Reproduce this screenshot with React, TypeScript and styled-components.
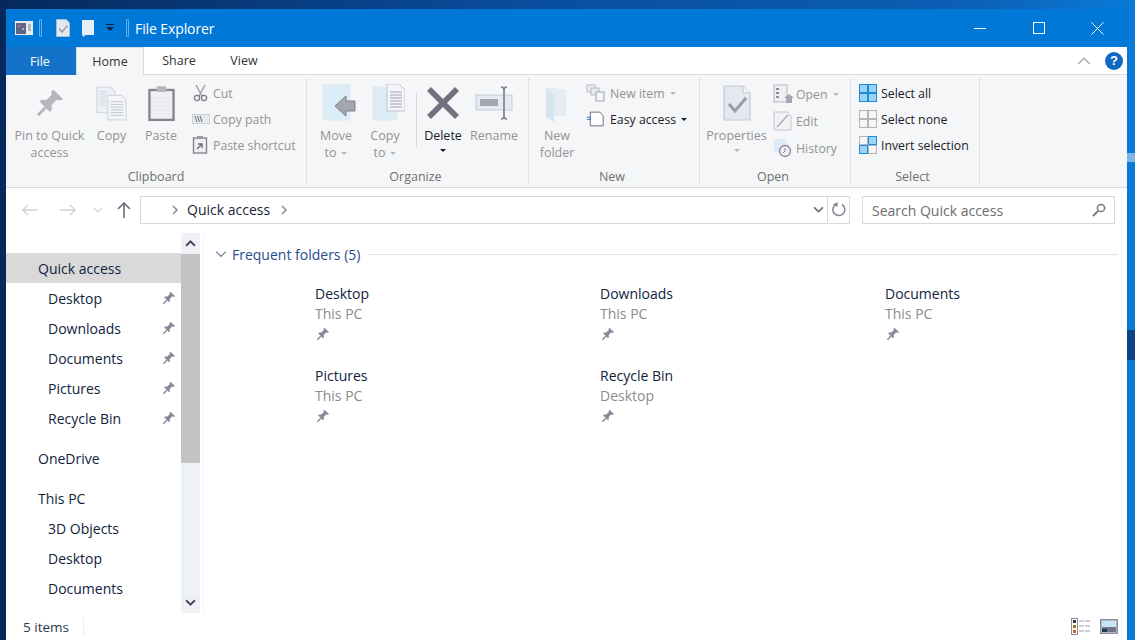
import React from "react";
import styled, { createGlobalStyle } from "styled-components";

const GlobalStyle = createGlobalStyle`
  html, body, #root {
    margin: 0;
    height: 100%;
  }
  body {
    overflow: hidden;
    font-family: "Open Sans", "Noto Sans", "Liberation Sans", sans-serif;
    background:
      linear-gradient(#0b4488, #0b4488) right 330px / 8px 30px no-repeat,
      linear-gradient(#7fb4e4, #7fb4e4) right 153px / 8px 9px no-repeat,
      linear-gradient(90deg, #06295c 0%, #0a4c9c 45%, #0b5fb5 85%, #0a7bd8 100%);
  }
`;

const Desktop = styled.div`
  height: 100%;
  box-sizing: border-box;
  padding: 9px 8px 0 6px;
  display: flex;
`;

const Frame = styled.div`
  flex: 1;
  min-width: 0;
  display: flex;
  flex-direction: column;
  background: #fff;
`;

const TitleBar = styled.div`
  height: 38px;
  flex: none;
  display: flex;
  align-items: center;
  background: #0078d7;
  color: #fff;
`;

const Quick = styled.div`
  display: flex;
  align-items: center;
  padding-left: 9px;
`;

const QuickIcon = styled.svg<{ $m?: number }>`
  display: block;
  flex: none;
  margin-left: ${({ $m }) => $m ?? 0}px;
`;

const TitleSep = styled.span<{ $m: number }>`
  width: 1px;
  height: 16px;
  margin-left: ${({ $m }) => $m}px;
  background: #0078d7;
  border: 1px solid #65aee8;
  border-radius: 1px;
`;

const Title = styled.div`
  margin-left: 6px;
  font-size: 14px;
  letter-spacing: -0.1px;
  flex: 1;
`;

const WinButtons = styled.div`
  display: flex;
  height: 100%;
`;

const WinButton = styled.div`
  width: 59px;
  display: flex;
  align-items: center;
  justify-content: center;
`;

const TabBar = styled.div`
  height: 28px;
  flex: none;
  display: flex;
  align-items: stretch;
  box-sizing: border-box;
  border-bottom: 1px solid #dadbdc;
  background: #fff;
  font-size: 12.5px;
  color: #333;
`;

const FileTab = styled.div`
  width: 70px;
  box-sizing: border-box;
  padding-right: 2px;
  margin-bottom: -1px;
  background: #1572c9;
  color: #fff;
  display: flex;
  align-items: center;
  justify-content: center;
`;

const Tab = styled.div<{ $active?: boolean; $w: number }>`
  width: ${({ $w }) => $w}px;
  box-sizing: border-box;
  display: flex;
  align-items: center;
  justify-content: center;
  margin-bottom: ${({ $active }) => ($active ? "-1px" : "0")};
  background: ${({ $active }) => ($active ? "#f5f6f7" : "#fff")};
  border: ${({ $active }) => ($active ? "1px solid #dadbdc" : "none")};
  border-bottom: none;
`;

const TabSpacer = styled.div`
  flex: 1;
`;

const TabTools = styled.div`
  display: flex;
  align-items: center;
  gap: 14px;
  padding-right: 4px;
`;

const HelpBadge = styled.div`
  width: 18px;
  height: 18px;
  border-radius: 50%;
  background: #1169c4;
  color: #fff;
  font: bold 13px "Liberation Sans", sans-serif;
  display: flex;
  align-items: center;
  justify-content: center;
`;

const Ribbon = styled.div`
  height: 113px;
  flex: none;
  box-sizing: border-box;
  display: flex;
  background: #f5f6f7;
  border-bottom: 1px solid #dadbdc;
  padding-top: 4px;
`;

const Group = styled.div<{ $w: number }>`
  width: ${({ $w }) => $w}px;
  flex: none;
  box-sizing: border-box;
  display: flex;
  flex-direction: column;
  margin-bottom: 3px;
  border-right: 1px dotted #c9cacb;
`;

const GroupBody = styled.div<{ $pad?: number }>`
  flex: 1;
  display: flex;
  padding-left: ${({ $pad }) => $pad ?? 0}px;
`;

const GroupLabel = styled.div<{ $nudge?: number }>`
  height: 17px;
  line-height: 20px;
  text-align: center;
  padding-right: ${({ $nudge }) => $nudge ?? 0}px;
  font-size: 12.5px;
  color: #707070;
`;

const BigButton = styled.div<{ $w: number; $on?: boolean }>`
  width: ${({ $w }) => $w}px;
  flex: none;
  display: flex;
  flex-direction: column;
  align-items: center;
  padding-top: 4px;
  text-align: center;
  font-size: 12.5px;
  line-height: 17px;
  color: ${({ $on }) => ($on ? "#1c1c28" : "#939393")};
`;

const BigIcon = styled.div`
  height: 40px;
  margin-bottom: 4px;
  display: flex;
  align-items: center;
  justify-content: center;
`;

const Caret = styled.span<{ $on?: boolean }>`
  display: inline-block;
  width: 0;
  height: 0;
  margin-left: 5px;
  vertical-align: 2px;
  border-left: 3.5px solid transparent;
  border-right: 3.5px solid transparent;
  border-top: 3.5px solid ${({ $on }) => ($on ? "#1c1c28" : "#b9b9b9")};
`;

const BlockCaret = styled(Caret)`
  display: block;
  margin: 5px auto 0;
`;

const OrgDivider = styled.div`
  width: 1px;
  height: 54px;
  margin: 14px 1px 0 6px;
  flex: none;
  background: #d5d6d7;
`;

const SmallList = styled.div<{ $left?: number; $gap: number; $top: number }>`
  display: flex;
  flex-direction: column;
  gap: ${({ $gap }) => $gap}px;
  padding-top: ${({ $top }) => $top}px;
  margin-left: ${({ $left }) => $left ?? 0}px;
`;

const SmallButton = styled.div<{ $slot: number; $on?: boolean }>`
  height: 20px;
  display: flex;
  align-items: center;
  white-space: nowrap;
  font-size: 12.3px;
  color: ${({ $on }) => ($on ? "#1c1c28" : "#939393")};

  & > svg {
    width: ${({ $slot }) => $slot}px;
    flex: none;
  }
`;

const AddressRow = styled.div`
  height: 45px;
  flex: none;
  display: flex;
  align-items: flex-start;
  padding-top: 8px;
  box-sizing: border-box;
`;

const NavArrows = styled.div`
  width: 134px;
  height: 27px;
  flex: none;
  display: flex;
  align-items: center;
`;

const AddressBox = styled.div`
  width: 710px;
  height: 28px;
  flex: none;
  box-sizing: border-box;
  padding-bottom: 1px;
  display: flex;
  align-items: center;
  border: 1px solid #d9d9d9;
  font-size: 14px;
  color: #1b2433;
`;

const Crumb = styled.span`
  margin: 0 10px 0 8px;
`;

const AddressGrow = styled.div`
  flex: 1;
`;

const Refresh = styled.div`
  width: 21px;
  height: 100%;
  margin-left: 3px;
  display: flex;
  align-items: center;
  justify-content: center;
  border-left: 1px solid #d9d9d9;
`;

const SearchBox = styled.div`
  width: 253px;
  height: 28px;
  margin-left: 12px;
  flex: none;
  box-sizing: border-box;
  padding: 0 8px 0 9px;
  display: flex;
  align-items: center;
  justify-content: space-between;
  border: 1px solid #d9d9d9;
  font-size: 14px;
  color: #6d6d6d;
`;

const Body = styled.div`
  flex: 1;
  min-height: 0;
  display: flex;
`;

const NavPane = styled.div`
  width: 175px;
  flex: none;
  padding-top: 20px;
  box-sizing: border-box;
  overflow: hidden;
`;

const NavRow = styled.div<{ $selected?: boolean; $root?: boolean; $gap?: boolean }>`
  height: 30px;
  display: flex;
  align-items: center;
  justify-content: space-between;
  box-sizing: border-box;
  padding: 0 5px 0 ${({ $root }) => ($root ? 32 : 42)}px;
  margin-top: ${({ $gap }) => ($gap ? 10 : 0)}px;
  font-size: 14px;
  color: #10233c;
  background: ${({ $selected }) => ($selected ? "#d9d9d9" : "transparent")};
`;

const Scrollbar = styled.div`
  width: 19px;
  flex: none;
  display: flex;
  flex-direction: column;
  background: #eef1f6;
`;

const ScrollArrow = styled.div`
  height: 21px;
  flex: none;
  display: flex;
  align-items: center;
  justify-content: center;
`;

const ScrollThumb = styled.div`
  height: 209px;
  flex: none;
  background: #c3c3c3;
`;

const ScrollTrack = styled.div`
  flex: 1;
`;

const Content = styled.div`
  flex: 1;
  min-width: 0;
  margin-left: 3px;
  border-left: 1px solid #f2f2f2;
  padding: 11px 9px 0 11px;
`;

const SectionHead = styled.div`
  height: 20px;
  display: flex;
  align-items: center;
  font-size: 14px;
  color: #1f4e8c;
`;

const SectionName = styled.span`
  margin: 0 8px 0 5px;
  white-space: nowrap;
`;

const SectionRule = styled.div`
  flex: 1;
  border-top: 1px solid #e2e2e2;
`;

const TileGrid = styled.div`
  display: grid;
  grid-template-columns: repeat(3, 285px);
  grid-auto-rows: 82px;
  padding: 20px 0 0 100px;
`;

const Tile = styled.div`
  display: flex;
  flex-direction: column;
`;

const TileName = styled.div`
  height: 20px;
  line-height: 20px;
  font-size: 14px;
  color: #10233c;
`;

const TileSub = styled(TileName)`
  color: #8b8b8b;
`;

const TilePin = styled.div`
  height: 20px;
  padding-left: 1px;
  display: flex;
  align-items: center;
`;

const StatusBar = styled.div`
  height: 27px;
  flex: none;
  display: flex;
  align-items: center;
  padding-left: 17px;
  font-size: 13.5px;
  color: #2e3a4a;
`;

const StatusText = styled.div`
  width: 60px;
  height: 18px;
  line-height: 18px;
  border-right: 1px solid #ececec;
`;

const ViewButtons = styled.div`
  margin-left: auto;
  padding-right: 9px;
  display: flex;
  align-items: center;
  gap: 10px;
`;

const Pin = ({ size = 14, color = "#8a8799" }: { size?: number; color?: string }) => (
  <svg width={size} height={size} viewBox="0 0 16 16">
    <path d="M10 1l5 5-1.4.5-2.2-.1-2.6 2.8.2 2.4-1 1.2-5.6-5.6 1.2-1 2.4.2 2.8-2.6-.1-2.2z" fill={color} />
    <path d="M5.5 10.5L1.5 14.5" stroke={color} strokeWidth="1.6" />
  </svg>
);

const Chevron = ({ dir, color = "#8a8a8a", size = 10, w = 1.4 }: { dir: "up" | "down" | "right"; color?: string; size?: number; w?: number }) => {
  const d = dir === "up" ? "M1 7l4-4 4 4" : dir === "down" ? "M1 3l4 4 4-4" : "M3 1l4 4-4 4";
  return (
    <svg width={size} height={size} viewBox="0 0 10 10">
      <path d={d} fill="none" stroke={color} strokeWidth={w} />
    </svg>
  );
};

const ExplorerIcon = () => (
  <QuickIcon width="18" height="14" viewBox="0 0 18 14">
    <rect width="18" height="14" fill="#e9ebf0" />
    <rect x="1" y="2" width="10" height="11" fill="#5d6685" />
    <rect x="3" y="4" width="2" height="2" fill="#c0707f" />
    <rect x="7" y="7" width="2" height="2" fill="#9fb0d4" />
    <rect x="13" y="3" width="3" height="7" fill="#b4b8c2" />
  </QuickIcon>
);

const PropsIcon = ({ w = 14, h = 18, m }: { w?: number; h?: number; m?: number }) => (
  <QuickIcon $m={m} width={w} height={h} viewBox="0 0 28 36">
    <path d="M1 1h19l7 7v27H1z" fill="#e3e8f1" stroke="#c5cad3" strokeWidth="1.2" />
    <path d="M20 1v7h7" fill="#f5f6f7" stroke="#c5cad3" strokeWidth="1.2" />
    <path d="M6 19l6 7 11-13" fill="none" stroke="#9b9ca6" strokeWidth="3" />
  </QuickIcon>
);

const PageStack = () => (
  <svg width="31" height="37" viewBox="0 0 34 38">
    <path d="M1 1h15l5 5v23H1z" fill="#eceff5" stroke="#cdd1d9" />
    <path d="M13 10h15l5 5v22H13z" fill="#f3f5f8" stroke="#c9cdd6" />
    {[17, 20, 23, 26, 29, 32].map((y) => (
      <path key={y} d={`M16 ${y}h14`} stroke="#c0c4cf" />
    ))}
    {[6, 9, 12, 15, 18, 21].map((y) => (
      <path key={y} d={`M4 ${y}h7`} stroke="#d2d6de" />
    ))}
  </svg>
);

const ClipboardIcon = () => (
  <svg width="27" height="38" viewBox="0 0 28 38">
    <rect x="1.5" y="5.5" width="25" height="31" fill="#eef0f4" stroke="#86838f" strokeWidth="2.4" />
    <rect x="9" y="1.5" width="10" height="6" rx="1.5" fill="#b5b5bd" />
    {[14, 18, 22, 26, 30].map((y) => (
      <path key={y} d={`M6 ${y}h16`} stroke="#d3d5db" strokeDasharray="1 2" />
    ))}
  </svg>
);

const MoveIcon = () => (
  <svg width="40" height="38" viewBox="0 0 40 38">
    <path d="M7 0h27v36H7z" fill="#dcedf7" stroke="#e2e8ee" />
    <path d="M19 22l11-10v5h9v10h-9v5z" fill="#a3a6ae" stroke="#7f8089" />
  </svg>
);

const CopyToIcon = () => (
  <svg width="40" height="38" viewBox="0 0 40 38">
    <path d="M8 3h24v33H8z" fill="#dcedf7" stroke="#e2e8ee" />
    <path d="M22 0h12l6 6v21H22z" fill="#f3f5f8" stroke="#c0c4cf" />
    {[8, 11, 14, 17, 20, 23].map((y) => (
      <path key={y} d={`M25 ${y}h12`} stroke="#9da1ad" />
    ))}
  </svg>
);

const DeleteIcon = () => (
  <svg width="32" height="32" viewBox="0 0 32 32">
    <path d="M4 0L16 12 28 0l4 4-12 12 12 12-4 4-12-12L4 32l-4-4 12-12L0 4z" fill="#73707f" />
  </svg>
);

const RenameIcon = () => (
  <svg width="38" height="36" viewBox="0 0 38 36">
    <rect x="1" y="10" width="36" height="15" fill="#e4ebf3" stroke="#c6ccd6" />
    <rect x="5" y="14" width="18" height="7" fill="#a4a6ae" />
    <path d="M26 2c2 0 3 1 3 3v26c0 2-1 3-3 3M32 2c-2 0-3 1-3 3v26c0 2 1 3 3 3" fill="none" stroke="#7e7c8a" strokeWidth="1.6" />
  </svg>
);

const FolderIcon = () => (
  <svg width="26" height="38" viewBox="0 0 26 38">
    <path d="M2 4h8l12 2v26H8z" fill="#e6ecf2" />
    <path d="M2 4l8 6v28l-8-5z" fill="#d6e6f1" />
  </svg>
);

const BlankDoc = () => (
  <svg width="28" height="18" viewBox="0 0 28 18">
    <path d="M5 1h11l4 4v12H5z" fill="#fff" stroke="#55596a" />
    <path d="M1 7h5M1 9.5h5" stroke="#1b6ec2" />
  </svg>
);

const SelectGrid = ({ fill }: { fill: boolean[] }) => (
  <svg width="23" height="18" viewBox="0 0 23 18">
    {[
      [1, 0],
      [10, 0],
      [1, 9],
      [10, 9],
    ].map(([x, y], i) => (
      <rect
        key={i}
        x={x + 0.5}
        y={y + 0.5}
        width="8"
        height="8"
        fill={fill[i] ? "#9ad4f5" : "none"}
        stroke={fill[i] ? "#1f8ad6" : "#b5b5b5"}
      />
    ))}
  </svg>
);

const clipRows = [
  { label: "Cut", icon: (
    <svg width="21" height="20" viewBox="0 0 21 20">
      <path d="M4 2l6 11M13 2L7 13" stroke="#9a9aa4" strokeWidth="1.3" />
      <circle cx="5" cy="15" r="2.6" fill="none" stroke="#7f7d8b" strokeWidth="1.3" />
      <circle cx="12" cy="15" r="2.6" fill="none" stroke="#7f7d8b" strokeWidth="1.3" />
    </svg>
  ) },
  { label: "Copy path", icon: (
    <svg width="21" height="12" viewBox="0 0 21 12">
      <rect x="0.5" y="1.5" width="17" height="9" fill="#e6e9ee" stroke="#cfd2d8" />
      <path d="M3 3l2 6M5.5 3l2 6M8 3l2 6" stroke="#6f6e7c" />
    </svg>
  ) },
  { label: "Paste shortcut", icon: (
    <svg width="21" height="20" viewBox="0 0 21 20">
      <rect x="1.5" y="3" width="13" height="15" fill="#eef0f4" stroke="#86838f" strokeWidth="1.4" />
      <rect x="5" y="1" width="6" height="3" fill="#9c9ca6" />
      <path d="M5 14l4-4M6 9h4v4" fill="none" stroke="#6f6e7c" strokeWidth="1.4" />
    </svg>
  ) },
];

const navRows = [
  { label: "Quick access", root: true, selected: true },
  { label: "Desktop", pin: true },
  { label: "Downloads", pin: true },
  { label: "Documents", pin: true },
  { label: "Pictures", pin: true },
  { label: "Recycle Bin", pin: true },
  { label: "OneDrive", root: true, gap: true },
  { label: "This PC", root: true, gap: true },
  { label: "3D Objects" },
  { label: "Desktop" },
  { label: "Documents" },
];

const tiles = [
  { name: "Desktop", sub: "This PC" },
  { name: "Downloads", sub: "This PC" },
  { name: "Documents", sub: "This PC" },
  { name: "Pictures", sub: "This PC" },
  { name: "Recycle Bin", sub: "Desktop" },
];

const App: React.FC = () => {
  return (
    <Desktop>
      <GlobalStyle />
      <Frame>
        <TitleBar>
          <Quick>
            <ExplorerIcon />
            <TitleSep $m={6} />
            <PropsIcon m={14} />
            <QuickIcon $m={12} width="12" height="18" viewBox="0 0 12 18">
              <path d="M0 1h12v15l-9 0-1 2-2-2z" fill="#e6edf4" />
            </QuickIcon>
            <QuickIcon $m={12} width="8" height="8" viewBox="0 0 8 8">
              <path d="M0 0h8v1H0zM0 3h8L4 7z" fill="#11233f" />
            </QuickIcon>
            <TitleSep $m={12} />
          </Quick>
          <Title>File Explorer</Title>
          <WinButtons>
            <WinButton>
              <svg width="12" height="12" viewBox="0 0 12 12">
                <path d="M0 6.5h12" stroke="#fff" />
              </svg>
            </WinButton>
            <WinButton>
              <svg width="12" height="12" viewBox="0 0 12 12">
                <rect x="0.5" y="0.5" width="11" height="11" fill="none" stroke="#fff" />
              </svg>
            </WinButton>
            <WinButton>
              <svg width="13" height="13" viewBox="0 0 13 13">
                <path d="M0.5 0.5l12 12M12.5 0.5l-12 12" stroke="#fff" />
              </svg>
            </WinButton>
          </WinButtons>
        </TitleBar>

        <TabBar>
          <FileTab>File</FileTab>
          <Tab $active $w={68}>Home</Tab>
          <Tab $w={70}>Share</Tab>
          <Tab $w={60}>View</Tab>
          <TabSpacer />
          <TabTools>
            <Chevron dir="up" size={14} w={1} color="#a9a9a9" />
            <HelpBadge>?</HelpBadge>
          </TabTools>
        </TabBar>

        <Ribbon>
          <Group $w={301}>
            <GroupBody>
              <BigButton $w={87}>
                <BigIcon><Pin size={30} color="#b4b5bd" /></BigIcon>
                Pin to Quick access
              </BigButton>
              <BigButton $w={37}>
                <BigIcon><PageStack /></BigIcon>
                Copy
              </BigButton>
              <BigButton $w={62}>
                <BigIcon><ClipboardIcon /></BigIcon>
                Paste
              </BigButton>
              <SmallList $gap={6} $top={4}>
                {clipRows.map((row) => (
                  <SmallButton key={row.label} $slot={21}>
                    {row.icon}
                    {row.label}
                  </SmallButton>
                ))}
              </SmallList>
            </GroupBody>
            <GroupLabel>Clipboard</GroupLabel>
          </Group>

          <Group $w={222}>
            <GroupBody $pad={5}>
              <BigButton $w={48}>
                <BigIcon><MoveIcon /></BigIcon>
                Move
                <span>to<Caret /></span>
              </BigButton>
              <BigButton $w={50}>
                <BigIcon><CopyToIcon /></BigIcon>
                Copy
                <span>to<Caret /></span>
              </BigButton>
              <OrgDivider />
              <BigButton $w={50} $on>
                <BigIcon><DeleteIcon /></BigIcon>
                Delete
                <BlockCaret $on />
              </BigButton>
              <BigButton $w={52}>
                <BigIcon><RenameIcon /></BigIcon>
                Rename
              </BigButton>
            </GroupBody>
            <GroupLabel $nudge={4}>Organize</GroupLabel>
          </Group>

          <Group $w={171}>
            <GroupBody $pad={3}>
              <BigButton $w={50}>
                <BigIcon><FolderIcon /></BigIcon>
                New folder
              </BigButton>
              <SmallList $left={4} $gap={6} $top={4}>
                <SmallButton $slot={24}>
                  <svg width="24" height="18" viewBox="0 0 24 18">
                    <rect x="1" y="1" width="8" height="7" fill="#e9ecf1" stroke="#b6b9c2" />
                    <rect x="5" y="4" width="8" height="7" fill="#e9ecf1" stroke="#b6b9c2" />
                    <rect x="10" y="8" width="8" height="9" fill="#f5f6f8" stroke="#9fa3ad" />
                  </svg>
                  New item<Caret />
                </SmallButton>
                <SmallButton $slot={24} $on>
                  <BlankDoc />
                  Easy access<Caret $on />
                </SmallButton>
              </SmallList>
            </GroupBody>
            <GroupLabel $nudge={4}>New</GroupLabel>
          </Group>

          <Group $w={151}>
            <GroupBody>
              <BigButton $w={73}>
                <BigIcon><PropsIcon w={28} h={36} /></BigIcon>
                Properties
                <BlockCaret />
              </BigButton>
              <SmallList $gap={7} $top={5}>
                <SmallButton $slot={23}>
                  <svg width="23" height="20" viewBox="0 0 23 20">
                    <rect x="1" y="1" width="13" height="17" fill="#eef0f4" stroke="#b5b8c0" />
                    <path d="M3 5h3M3 9h3M3 13h3" stroke="#8d8d98" strokeWidth="2" />
                    <path d="M11 14l5-4 5 4h-2v5h-6v-5z" fill="#a6a7b0" />
                  </svg>
                  Open<Caret />
                </SmallButton>
                <SmallButton $slot={23}>
                  <svg width="23" height="20" viewBox="0 0 23 20">
                    <path d="M1 1h13l4 4v14H1z" fill="#f0f2f6" stroke="#c3c6ce" />
                    <path d="M4 16L15 4" stroke="#a9aab3" strokeWidth="1.4" />
                  </svg>
                  Edit
                </SmallButton>
                <SmallButton $slot={23}>
                  <svg width="23" height="20" viewBox="0 0 23 20">
                    <path d="M1 1h10l5 5v8H1z" fill="#dcebf5" />
                    <circle cx="12" cy="13" r="5.5" fill="#eceef2" stroke="#85838f" strokeWidth="1.3" />
                    <path d="M12 10v3l-2 2" fill="none" stroke="#85838f" />
                  </svg>
                  History
                </SmallButton>
              </SmallList>
            </GroupBody>
            <GroupLabel $nudge={4}>Open</GroupLabel>
          </Group>

          <Group $w={129}>
            <GroupBody $pad={7}>
              <SmallList $gap={6} $top={4}>
                <SmallButton $slot={23} $on>
                  <SelectGrid fill={[true, true, true, true]} />
                  Select all
                </SmallButton>
                <SmallButton $slot={23} $on>
                  <SelectGrid fill={[false, false, false, false]} />
                  Select none
                </SmallButton>
                <SmallButton $slot={23} $on>
                  <SelectGrid fill={[false, true, true, false]} />
                  Invert selection
                </SmallButton>
              </SmallList>
            </GroupBody>
            <GroupLabel $nudge={5}>Select</GroupLabel>
          </Group>
        </Ribbon>

        <AddressRow>
          <NavArrows>
            <QuickIcon $m={16} width="16" height="12" viewBox="0 0 16 12">
              <path d="M0 6h16M6 1L1 6l5 5" fill="none" stroke="#d0d2d6" strokeWidth="1.3" />
            </QuickIcon>
            <QuickIcon $m={22} width="16" height="12" viewBox="0 0 16 12">
              <path d="M0 6h16M10 1l5 5-5 5" fill="none" stroke="#d0d2d6" strokeWidth="1.3" />
            </QuickIcon>
            <QuickIcon $m={17} width="10" height="10" viewBox="0 0 10 10">
              <path d="M1 3l4 4 4-4" fill="none" stroke="#d0d2d6" strokeWidth="1.2" />
            </QuickIcon>
            <QuickIcon $m={14} width="14" height="16" viewBox="0 0 14 16">
              <path d="M7 16V1M1 7l6-6 6 6" fill="none" stroke="#6f6d7c" strokeWidth="1.6" />
            </QuickIcon>
          </NavArrows>
          <AddressBox>
            <QuickIcon $m={30} width="8" height="10" viewBox="0 0 8 10">
              <path d="M2 1l4 4-4 4" fill="none" stroke="#8d8b98" strokeWidth="1.5" />
            </QuickIcon>
            <Crumb>Quick access</Crumb>
            <QuickIcon width="8" height="10" viewBox="0 0 8 10">
              <path d="M2 1l4 4-4 4" fill="none" stroke="#8d8b98" strokeWidth="1.5" />
            </QuickIcon>
            <AddressGrow />
            <Chevron dir="down" size={11} color="#6f6d7c" w={1.5} />
            <Refresh>
              <svg width="15" height="15" viewBox="0 0 15 15">
                <path d="M4.5 2.6A6 6 0 1 0 11 2.5" fill="none" stroke="#85838f" strokeWidth="1.5" />
                <path d="M7.5 0v5L3 2.5z" fill="#85838f" transform="translate(-1 0)" />
              </svg>
            </Refresh>
          </AddressBox>
          <SearchBox>
            Search Quick access
            <svg width="14" height="14" viewBox="0 0 14 14">
              <circle cx="9" cy="5" r="3.6" fill="none" stroke="#77757f" strokeWidth="1.5" />
              <path d="M6.2 7.8L1 13" stroke="#77757f" strokeWidth="1.9" />
            </svg>
          </SearchBox>
        </AddressRow>

        <Body>
          <NavPane>
            {navRows.map((row, i) => (
              <NavRow key={i} $root={row.root} $selected={row.selected} $gap={row.gap}>
                {row.label}
                {row.pin && <Pin size={14} />}
              </NavRow>
            ))}
          </NavPane>
          <Scrollbar>
            <ScrollArrow><Chevron dir="up" color="#54415f" size={11} w={1.8} /></ScrollArrow>
            <ScrollThumb />
            <ScrollTrack />
            <ScrollArrow><Chevron dir="down" color="#54415f" size={11} w={1.8} /></ScrollArrow>
          </Scrollbar>
          <Content>
            <SectionHead>
              <Chevron dir="down" size={12} w={1} color="#6f8199" />
              <SectionName>Frequent folders (5)</SectionName>
              <SectionRule />
            </SectionHead>
            <TileGrid>
              {tiles.map((tile) => (
                <Tile key={tile.name}>
                  <TileName>{tile.name}</TileName>
                  <TileSub>{tile.sub}</TileSub>
                  <TilePin><Pin size={14} /></TilePin>
                </Tile>
              ))}
            </TileGrid>
          </Content>
        </Body>

        <StatusBar>
          <StatusText>5 items</StatusText>
          <ViewButtons>
            <svg width="19" height="17" viewBox="0 0 19 17">
              <rect x="0.5" y="0.5" width="6" height="16" fill="#fff" stroke="#8f8d9b" />
              <rect x="2" y="2" width="3" height="3" fill="#3a3a48" />
              <rect x="2" y="7" width="3" height="3" fill="#a8722f" />
              <rect x="2" y="12" width="3" height="3" fill="#c76a20" />
              <path d="M8 3h5M14 3h5M8 8h5M14 8h5M8 13h5M14 13h5" stroke="#9d9ba8" />
            </svg>
            <svg width="18" height="15" viewBox="0 0 18 15">
              <rect x="0.75" y="0.75" width="16.5" height="13.5" fill="#c7e6f5" stroke="#8f8d9b" strokeWidth="1.5" />
              <path d="M2 8h14v5H2z" fill="#6f7488" />
              <path d="M2 10h5v3H2z" fill="#16375e" />
            </svg>
          </ViewButtons>
        </StatusBar>
      </Frame>
    </Desktop>
  );
};

export default App;
